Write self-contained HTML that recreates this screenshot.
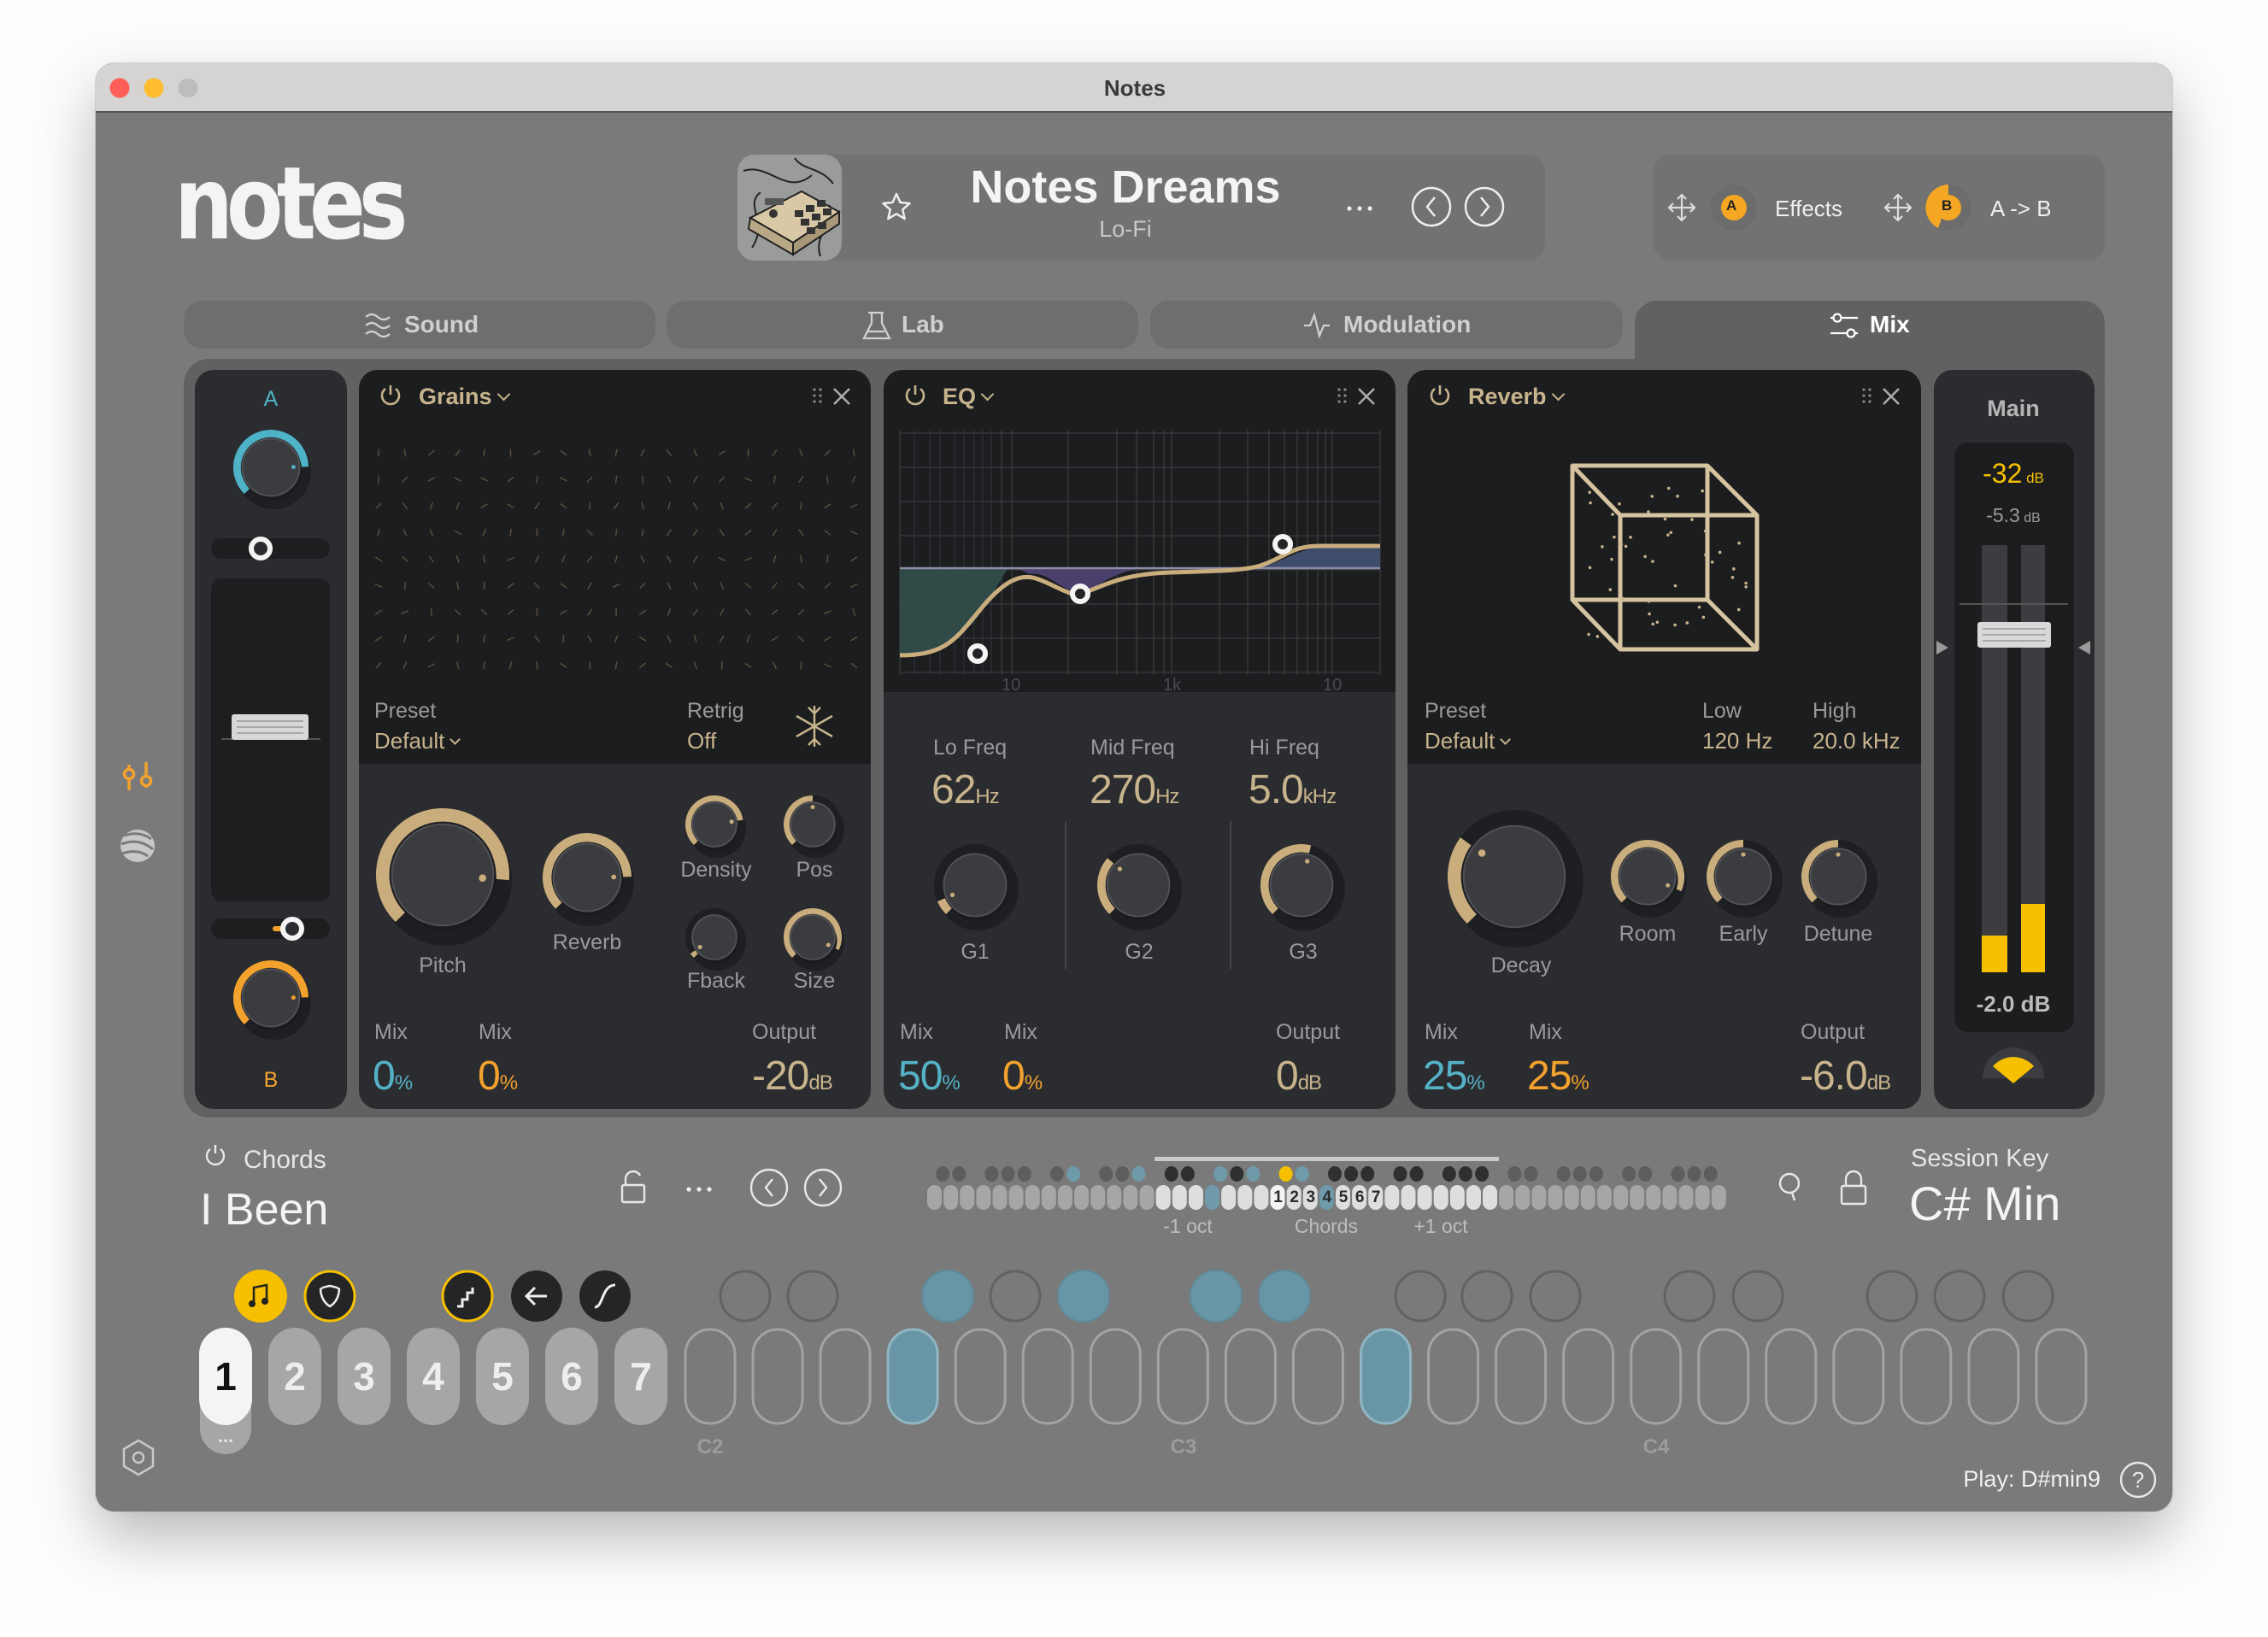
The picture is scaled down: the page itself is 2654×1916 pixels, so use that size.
<!DOCTYPE html>
<html><head><meta charset="utf-8">
<style>
*{box-sizing:border-box}
body{margin:0;width:2654px;height:1916px;background:#fdfdfd;position:relative;overflow:hidden;font-family:"Liberation Sans",sans-serif}
.a{position:absolute}
.t{position:absolute;white-space:nowrap;line-height:1}
.lab{color:#9a9a9c;font-size:25px}
.tan{color:#c8b48c}
.big{font-size:48px;letter-spacing:-1px}
.u{font-size:24px}
.blue{color:#55b2c6}
.org{color:#f3a22e}
.chev{display:inline-block;width:11px;height:11px;border-right:2.5px solid currentColor;border-bottom:2.5px solid currentColor;transform:rotate(45deg);margin-left:8px;position:relative;top:-6px}
</style></head><body>
<div class="a" style="left:112px;top:74px;width:2430px;height:1695px;border-radius:22px;background:#7a7a7a;box-shadow:0 30px 70px rgba(0,0,0,.28),0 0 0 1px rgba(0,0,0,.12);overflow:hidden">
 <div class="a" style="left:0;top:0;width:2430px;height:58px;background:#d5d4d3;border-bottom:2px solid #555"></div>
</div>
<div class="a" style="left:863px;top:181px;width:945px;height:124px;border-radius:20px;background:#727272"></div>
<div class="a" style="left:1935px;top:181px;width:528px;height:124px;border-radius:20px;background:#727272"></div>
<div class="a" style="left:215px;top:352px;width:552px;height:56px;border-radius:22px;background:#6e6e6e"></div>
<div class="a" style="left:780px;top:352px;width:552px;height:56px;border-radius:22px;background:#6e6e6e"></div>
<div class="a" style="left:1346px;top:352px;width:553px;height:56px;border-radius:22px;background:#6e6e6e"></div>
<div class="a" style="left:1913px;top:352px;width:550px;height:90px;border-radius:26px 26px 0 0;background:#616161"></div>
<div class="a" style="left:215px;top:420px;width:2248px;height:888px;border-radius:30px;background:#616161"></div>
<div class="a" style="left:228px;top:433px;width:178px;height:865px;border-radius:22px;background:#2b2c2f"></div>
<div class="a" style="left:247px;top:677px;width:139px;height:378px;border-radius:12px;background:#1d1e20"></div>
<div class="a" style="left:247px;top:630px;width:139px;height:24px;border-radius:12px;background:#1d1e20"></div>
<div class="a" style="left:247px;top:1075px;width:139px;height:24px;border-radius:12px;background:#1d1e20"></div>
<div class="a" style="left:420px;top:433px;width:599px;height:865px;border-radius:22px;background:#2b2c2f;overflow:hidden"><div class="a" style="left:0;top:0;width:599px;height:461px;background:#1c1d1f"></div></div>
<div class="a" style="left:1034px;top:433px;width:599px;height:865px;border-radius:22px;background:#2b2c2f;overflow:hidden"><div class="a" style="left:0;top:0;width:599px;height:377px;background:#1c1d1f"></div></div>
<div class="a" style="left:1647px;top:433px;width:601px;height:865px;border-radius:22px;background:#2b2c2f;overflow:hidden"><div class="a" style="left:0;top:0;width:601px;height:461px;background:#1c1d1f"></div></div>
<div class="a" style="left:2263px;top:433px;width:188px;height:865px;border-radius:22px;background:#2b2c2f"></div>
<div class="a" style="left:2287px;top:518px;width:140px;height:690px;border-radius:16px;background:#1c1d1f"></div>

<svg id="g" class="a" style="left:0;top:0" width="2654" height="1916" viewBox="0 0 2654 1916">
 <circle cx="140" cy="103" r="11.5" fill="#fe5f57"/><circle cx="180" cy="103" r="11.5" fill="#febc2e"/><circle cx="220" cy="103" r="11.5" fill="#bdbdbd"/>
 <clipPath id="ac"><rect x="863" y="181" width="122" height="124" rx="20"/></clipPath>
 <g clip-path="url(#ac)">
  <rect x="863" y="181" width="122" height="124" fill="#9a9c9b"/>
  <path d="M870 200 C900 190 920 230 950 205 M880 290 C900 260 870 240 890 225 M960 300 C950 270 985 260 970 240 M930 185 C940 200 960 195 975 215" stroke="#222" stroke-width="2" fill="none"/>
  <polygon points="878,255 938,224 982,248 928,284" fill="#d9c8a6" stroke="#222" stroke-width="2"/>
  <polygon points="878,255 928,284 928,298 876,268" fill="#b8a886" stroke="#222" stroke-width="2"/>
  <polygon points="928,284 982,248 982,262 928,298" fill="#a89878" stroke="#222" stroke-width="2"/>
  <g fill="#333"><rect x="930" y="246" width="10" height="8"/><rect x="943" y="240" width="10" height="8"/><rect x="956" y="234" width="10" height="8"/><rect x="937" y="256" width="10" height="8"/><rect x="950" y="250" width="10" height="8"/><rect x="963" y="244" width="10" height="8"/><rect x="944" y="266" width="10" height="8"/><rect x="957" y="260" width="10" height="8"/></g>
  <circle cx="905" cy="250" r="5" fill="#333"/><rect x="895" y="232" width="22" height="8" fill="#555"/>
 </g>
 <path d="M1049 227 l4.5 10 11 1 -8.3 7.3 2.5 10.8 -9.7-5.8 -9.7 5.8 2.5-10.8 -8.3-7.3 11-1z" fill="none" stroke="#eee" stroke-width="2.5" stroke-linejoin="round"/>
 <circle cx="1579" cy="244" r="2.6" fill="#eee"/><circle cx="1591" cy="244" r="2.6" fill="#eee"/><circle cx="1603" cy="244" r="2.6" fill="#eee"/>
 <circle cx="1675" cy="242" r="22" fill="none" stroke="#eee" stroke-width="2.5"/><path d="M1679 231 l-9 11 9 11" fill="none" stroke="#eee" stroke-width="2.5"/>
 <circle cx="1737" cy="242" r="22" fill="none" stroke="#eee" stroke-width="2.5"/><path d="M1733 231 l9 11 -9 11" fill="none" stroke="#eee" stroke-width="2.5"/>
 <g stroke="#ddd" stroke-width="2.2" fill="none">
  <path d="M1968 228 v30 M1953 243 h30 M1963 233 l5-5 5 5 M1963 253 l5 5 5-5 M1958 238 l-5 5 5 5 M1978 238 l5 5 -5 5"/>
  <path d="M2221 228 v30 M2206 243 h30 M2216 233 l5-5 5 5 M2216 253 l5 5 5-5 M2211 238 l-5 5 5 5 M2231 238 l5 5 -5 5"/>
 </g>
 <circle cx="2029" cy="243" r="27" fill="#6c6c6c"/><circle cx="2029" cy="243" r="15" fill="#f5a623"/>
 <circle cx="2280" cy="243" r="27" fill="#6c6c6c"/><path d="M2280 216 A27 27 0 0 0 2268 267 L2272 256 A16 16 0 0 1 2280 228 Z" fill="#f5a623"/><circle cx="2280" cy="243" r="15" fill="#f5a623"/>
 <g stroke="#d0d0d0" stroke-width="2.3" fill="none">
  <path d="M428 371 q7-6 14 0 t14 0 M428 381 q7-6 14 0 t14 0 M428 391 q7-6 14 0 t14 0"/>
  <path d="M1020 366 v12 l-9 18 h30 l-9-18 v-12 M1016 366 h18 M1015 388 h20"/>
  <path d="M1526 381 h7 l5-12 6 24 5-12 h7"/>
 </g>
 <g stroke="#fff" stroke-width="2.3" fill="none"><path d="M2142 372 h32 M2142 390 h32"/><circle cx="2150" cy="372" r="4.5" fill="#616161"/><circle cx="2166" cy="390" r="4.5" fill="#616161"/></g>
 <g stroke="#f3a22e" stroke-width="3.5" fill="none"><path d="M151 895 v30 M171 892 v30"/><circle cx="151" cy="906" r="5.5" fill="#7a7a7a"/><circle cx="171" cy="914" r="5.5" fill="#7a7a7a"/></g>
 <ellipse cx="161" cy="990" rx="20" ry="19" fill="#c8c8c8"/>
 <g stroke="#7a7a7a" stroke-width="3" fill="none"><path d="M145 978 q18-6 32 4 M142 988 q20-8 37 6 M143 999 q18-6 30 3"/></g>
 <g id="hdr" stroke="#c8b48c" stroke-width="2.6" fill="none"></g>
 <g stroke="#c8b48c" stroke-width="2.5" fill="none"><path d="M953 826 v48 M932 838 l42 24 M932 862 l42-24 M946 828 l7 7 7-7 M946 872 l7-7 7 7"/></g>
 <g id="ticks" stroke="#6a5e46" stroke-width="1.4" opacity=".8"></g>
 <g id="eqgrid" stroke="#3a3b3e" stroke-width="1.3"></g>
 <path d="M1053 665 H1180 C1160 690 1140 767 1053 767 Z" fill="#33504c" opacity=".9"/>
 <path d="M1190 665 H1340 C1300 668 1280 692 1264 695 C1240 690 1225 668 1205 672 Z" fill="#4a3f6a"/>
 <path d="M1470 665 C1500 660 1520 639 1560 639 H1615 V665 Z" fill="#3f4d6d"/>
 <line x1="1053" y1="665" x2="1615" y2="665" stroke="#8e8ea6" stroke-width="2.5"/>
 <path d="M1053 767 C1110 767 1120 745 1150 710 C1175 680 1195 670 1215 678 C1235 685 1250 697 1264 695 C1285 690 1305 672 1370 670 C1420 668 1450 669 1475 662 C1505 652 1510 639 1545 639 H1615" fill="none" stroke="#c9ad7d" stroke-width="5"/>
 <g fill="#232427" stroke="#f4f4f4" stroke-width="6"><circle cx="1144" cy="765" r="9"/><circle cx="1264" cy="695" r="9"/><circle cx="1501" cy="637" r="9"/></g>
 <g stroke="#d6c4a0" stroke-width="5" fill="none" stroke-linejoin="round"><path d="M1840 545 H1998 V702 H1840 Z M1896 603 H2056 V760 H1896 Z M1840 545 L1896 603 M1998 545 L2056 603 M1840 702 L1896 760 M1998 702 L2056 760"/></g>
 <g id="cubedots" fill="#c8b48c"></g>
 <rect x="2319" y="638" width="30" height="500" fill="#3c3d40"/><rect x="2365" y="638" width="28" height="500" fill="#3c3d40"/>
 <rect x="2319" y="1095" width="30" height="43" fill="#f6c000"/><rect x="2365" y="1058" width="28" height="80" fill="#f6c000"/>
 <line x1="2293" y1="707" x2="2420" y2="707" stroke="#555" stroke-width="2"/>
 <rect x="2314" y="728" width="86" height="30" rx="3" fill="#d8d8d8"/><g stroke="#999" stroke-width="1.5"><path d="M2320 736 h74 M2320 743 h74 M2320 750 h74"/></g>
 <path d="M2266 750 l14 8 -14 8z M2446 750 l-14 8 14 8z" fill="#9a9a9a"/>
 <path d="M2320 1262 A36 36 0 0 1 2392 1262 Z" fill="#3c3d40"/>
 <path d="M2332 1248 A32 32 0 0 1 2380 1248 L2356 1268 Z M2332 1248 Q2356 1228 2380 1248" fill="#f6c000"/>
 <circle cx="305" cy="642" r="11" fill="#2b2c2f" stroke="#f4f4f4" stroke-width="6"/>
 <rect x="319" y="1084" width="18" height="6" rx="3" fill="#f3a22e"/>
 <circle cx="342" cy="1087" r="11" fill="#2b2c2f" stroke="#f4f4f4" stroke-width="6"/>
 <line x1="259" y1="865" x2="375" y2="865" stroke="#555" stroke-width="2"/>
 <rect x="271" y="836" width="90" height="30" rx="3" fill="#d8d8d8"/><g stroke="#999" stroke-width="1.5"><path d="M277 844 h78 M277 851 h78 M277 858 h78"/></g>
 <g id="knobs"></g>
 <line x1="1247" y1="961" x2="1247" y2="1134" stroke="#45464a" stroke-width="2"/><line x1="1440" y1="961" x2="1440" y2="1134" stroke="#45464a" stroke-width="2"/>
 <g stroke="#e8e8e8" stroke-width="2.4" fill="none">
  <path d="M246 1345 a10 10 0 1 0 12 0 M252 1340 v10"/>
  <rect x="728" y="1387" width="26" height="20" rx="2"/><path d="M732 1387 v-8 a9 9 0 0 1 17-3"/>
  <circle cx="900" cy="1390" r="21"/><path d="M904 1380 l-8 10 8 10"/>
  <circle cx="963" cy="1390" r="21"/><path d="M959 1380 l8 10 -8 10"/>
  <circle cx="2094" cy="1385" r="11"/><path d="M2097 1396 l3 9"/>
  <rect x="2155" y="1388" width="28" height="21" rx="2"/><path d="M2160 1388 v-8 a9 9 0 0 1 18 0 v8"/>
  <circle cx="2502" cy="1732" r="20"/>
 </g>
 <circle cx="806" cy="1392" r="2.6" fill="#eee"/><circle cx="818" cy="1392" r="2.6" fill="#eee"/><circle cx="830" cy="1392" r="2.6" fill="#eee"/>
 <rect x="1351" y="1354" width="403" height="5" fill="#c9c9c9"/>
 <g id="mini"></g>
 <g id="bigk"></g>
 <circle cx="305" cy="1517" r="31" fill="#f6c000"/>
 <g stroke="#222" stroke-width="2.5" fill="none"><path d="M297 1525 v-18 l15-3 v18"/></g><circle cx="295" cy="1526" r="4" fill="#222"/><circle cx="310" cy="1523" r="4" fill="#222"/>
 <circle cx="386" cy="1517" r="29" fill="#242527" stroke="#f6c000" stroke-width="3"/>
 <path d="M386 1505 q10 2 11 4 q-1 14 -11 20 q-10-6 -11-20 q1-2 11-4z" fill="none" stroke="#eee" stroke-width="2.5"/>
 <circle cx="547" cy="1517" r="29" fill="#242527" stroke="#f6c000" stroke-width="3"/>
 <path d="M535 1529 h6 v-8 h6 v-8 h6 v-6" fill="none" stroke="#eee" stroke-width="3"/>
 <circle cx="628" cy="1517" r="30" fill="#242527"/>
 <path d="M640 1517 h-24 M626 1507 l-10 10 10 10" fill="none" stroke="#eee" stroke-width="3"/>
 <circle cx="708" cy="1517" r="30" fill="#242527"/>
 <path d="M696 1530 c10 0 8-26 24-26" fill="none" stroke="#eee" stroke-width="3"/>
 <path d="M162 1686 l17 10 v20 l-17 10 -17-10 v-20z" fill="none" stroke="#c8c8c8" stroke-width="2.5"/><circle cx="162" cy="1706" r="6" fill="none" stroke="#c8c8c8" stroke-width="2.5"/>
</svg>

<div class="t" style="left:1328px;top:90px;transform:translateX(-50%);font-size:26px;font-weight:bold;color:#3a3a3a">Notes</div>
<div class="t" style="left:204px;top:180px;font-size:124px;font-weight:900;color:#f4f4f4;letter-spacing:-10px;transform:scale(0.78,0.95);transform-origin:left top;font-family:'DejaVu Sans','Liberation Sans',sans-serif">notes</div>
<div class="t" style="left:1317px;top:192px;transform:translateX(-50%);font-size:54px;font-weight:bold;color:#f4f4f4">Notes Dreams</div>
<div class="t" style="left:1317px;top:255px;transform:translateX(-50%);font-size:27px;color:#c8c8c8">Lo-Fi</div>
<div class="t" style="left:2020px;top:232px;font-size:17px;font-weight:bold;color:#222">A</div>
<div class="t" style="left:2272px;top:232px;font-size:17px;font-weight:bold;color:#222">B</div>
<div class="t" style="left:2077px;top:231px;font-size:26px;color:#efefef">Effects</div>
<div class="t" style="left:2329px;top:231px;font-size:26px;color:#efefef">A -&gt; B</div>
<div class="t" style="left:473px;top:366px;font-size:28px;font-weight:bold;color:#d0d0d0">Sound</div>
<div class="t" style="left:1055px;top:366px;font-size:28px;font-weight:bold;color:#d0d0d0">Lab</div>
<div class="t" style="left:1572px;top:366px;font-size:28px;font-weight:bold;color:#d0d0d0">Modulation</div>
<div class="t" style="left:2188px;top:366px;font-size:28px;font-weight:bold;color:#fff">Mix</div>

<div class="t" style="left:317px;top:455px;transform:translateX(-50%);font-size:25px;color:#4fb3c8">A</div>
<div class="t" style="left:317px;top:1252px;transform:translateX(-50%);font-size:25px;color:#f3a22e">B</div>

<div class="t tan" style="left:490px;top:451px;font-size:27px;font-weight:bold">Grains<span class="chev"></span></div>
<div class="t lab" style="left:438px;top:820px">Preset</div>
<div class="t tan" style="left:438px;top:854px;font-size:26px">Default<span class="chev" style="width:9px;height:9px;border-width:2px"></span></div>
<div class="t lab" style="left:804px;top:820px">Retrig</div>
<div class="t tan" style="left:804px;top:854px;font-size:26px">Off</div>
<div class="t lab" style="left:518px;top:1118px;transform:translateX(-50%)">Pitch</div>
<div class="t lab" style="left:687px;top:1091px;transform:translateX(-50%)">Reverb</div>
<div class="t lab" style="left:838px;top:1006px;transform:translateX(-50%)">Density</div>
<div class="t lab" style="left:953px;top:1006px;transform:translateX(-50%)">Pos</div>
<div class="t lab" style="left:838px;top:1136px;transform:translateX(-50%)">Fback</div>
<div class="t lab" style="left:953px;top:1136px;transform:translateX(-50%)">Size</div>
<div class="t lab" style="left:438px;top:1196px">Mix</div>
<div class="t lab" style="left:560px;top:1196px">Mix</div>
<div class="t lab" style="left:880px;top:1196px">Output</div>
<div class="t big blue" style="left:436px;top:1236px">0<span class="u">%</span></div>
<div class="t big org" style="left:559px;top:1236px">0<span class="u">%</span></div>
<div class="t big tan" style="left:880px;top:1236px">-20<span class="u">dB</span></div>

<div class="t tan" style="left:1103px;top:451px;font-size:27px;font-weight:bold">EQ<span class="chev"></span></div>
<div class="t" style="left:1172px;top:792px;font-size:20px;color:#4a4b4e">10</div>
<div class="t" style="left:1361px;top:792px;font-size:20px;color:#4a4b4e">1k</div>
<div class="t" style="left:1548px;top:792px;font-size:20px;color:#4a4b4e">10</div>
<div class="t lab" style="left:1092px;top:863px">Lo Freq</div>
<div class="t lab" style="left:1276px;top:863px">Mid Freq</div>
<div class="t lab" style="left:1462px;top:863px">Hi Freq</div>
<div class="t big tan" style="left:1090px;top:901px">62<span class="u">Hz</span></div>
<div class="t big tan" style="left:1275px;top:901px">270<span class="u">Hz</span></div>
<div class="t big tan" style="left:1461px;top:901px">5.0<span class="u">kHz</span></div>
<div class="t lab" style="left:1141px;top:1102px;transform:translateX(-50%)">G1</div>
<div class="t lab" style="left:1333px;top:1102px;transform:translateX(-50%)">G2</div>
<div class="t lab" style="left:1525px;top:1102px;transform:translateX(-50%)">G3</div>
<div class="t lab" style="left:1053px;top:1196px">Mix</div>
<div class="t lab" style="left:1175px;top:1196px">Mix</div>
<div class="t lab" style="left:1493px;top:1196px">Output</div>
<div class="t big blue" style="left:1051px;top:1236px">50<span class="u">%</span></div>
<div class="t big org" style="left:1173px;top:1236px">0<span class="u">%</span></div>
<div class="t big tan" style="left:1493px;top:1236px">0<span class="u">dB</span></div>

<div class="t tan" style="left:1718px;top:451px;font-size:27px;font-weight:bold">Reverb<span class="chev"></span></div>
<div class="t lab" style="left:1667px;top:820px">Preset</div>
<div class="t tan" style="left:1667px;top:854px;font-size:26px">Default<span class="chev" style="width:9px;height:9px;border-width:2px"></span></div>
<div class="t lab" style="left:1992px;top:820px">Low</div>
<div class="t tan" style="left:1992px;top:854px;font-size:26px">120 Hz</div>
<div class="t lab" style="left:2121px;top:820px">High</div>
<div class="t tan" style="left:2121px;top:854px;font-size:26px">20.0 kHz</div>
<div class="t lab" style="left:1780px;top:1118px;transform:translateX(-50%)">Decay</div>
<div class="t lab" style="left:1928px;top:1081px;transform:translateX(-50%)">Room</div>
<div class="t lab" style="left:2040px;top:1081px;transform:translateX(-50%)">Early</div>
<div class="t lab" style="left:2151px;top:1081px;transform:translateX(-50%)">Detune</div>
<div class="t lab" style="left:1667px;top:1196px">Mix</div>
<div class="t lab" style="left:1789px;top:1196px">Mix</div>
<div class="t lab" style="left:2107px;top:1196px">Output</div>
<div class="t big blue" style="left:1665px;top:1236px">25<span class="u">%</span></div>
<div class="t big org" style="left:1787px;top:1236px">25<span class="u">%</span></div>
<div class="t big tan" style="left:2106px;top:1236px">-6.0<span class="u">dB</span></div>

<div class="t" style="left:2356px;top:465px;transform:translateX(-50%);font-size:27px;font-weight:bold;color:#b5b5b5">Main</div>
<div class="t" style="left:2356px;top:538px;transform:translateX(-50%);font-size:32px;color:#f6c000">-32<span style="font-size:17px"> dB</span></div>
<div class="t" style="left:2356px;top:592px;transform:translateX(-50%);font-size:23px;color:#9a9a9a">-5.3<span style="font-size:16px"> dB</span></div>
<div class="t" style="left:2356px;top:1162px;transform:translateX(-50%);font-size:26px;font-weight:bold;color:#bbb">-2.0 dB</div>

<div class="t" style="left:285px;top:1343px;font-size:30px;color:#e6e6e6">Chords</div>
<div class="t" style="left:234px;top:1390px;font-size:52px;color:#f4f4f4">I Been</div>
<div class="t" style="left:1390px;top:1424px;transform:translateX(-50%);font-size:23px;color:#bdbdbd">-1 oct</div>
<div class="t" style="left:1552px;top:1424px;transform:translateX(-50%);font-size:23px;color:#bdbdbd">Chords</div>
<div class="t" style="left:1686px;top:1424px;transform:translateX(-50%);font-size:23px;color:#bdbdbd">+1 oct</div>
<div class="t" style="left:2236px;top:1342px;font-size:29px;color:#e6e6e6">Session Key</div>
<div class="t" style="left:2234px;top:1381px;font-size:56px;color:#f4f4f4">C# Min</div>
<div class="t" style="left:831px;top:1682px;transform:translateX(-50%);font-size:24px;font-weight:bold;color:#9c9c9c">C2</div>
<div class="t" style="left:1385px;top:1682px;transform:translateX(-50%);font-size:24px;font-weight:bold;color:#9c9c9c">C3</div>
<div class="t" style="left:1938px;top:1682px;transform:translateX(-50%);font-size:24px;font-weight:bold;color:#9c9c9c">C4</div>
<div class="t" style="left:2458px;top:1718px;transform:translateX(-100%);font-size:27px;color:#f0f0f0">Play: D#min9</div>
<div class="t" style="left:2502px;top:1719px;transform:translateX(-50%);font-size:26px;color:#e8e8e8">?</div>
<div class="t" style="left:264px;top:1670px;transform:translateX(-50%);font-size:22px;font-weight:bold;color:#e8e8e8">...</div>

<div class="t" style="left:1486px;top:1392px;font-size:19px;font-weight:bold;color:#2a2a2a;letter-spacing:0">
<span style="display:inline-block;width:19.12px;text-align:center">1</span><span style="display:inline-block;width:19.12px;text-align:center">2</span><span style="display:inline-block;width:19.12px;text-align:center">3</span><span style="display:inline-block;width:19.12px;text-align:center">4</span><span style="display:inline-block;width:19.12px;text-align:center">5</span><span style="display:inline-block;width:19.12px;text-align:center">6</span><span style="display:inline-block;width:19.12px;text-align:center">7</span></div>

<div class="t" style="left:264px;top:1588px;transform:translateX(-50%);font-size:46px;font-weight:bold;color:#111">1</div>
<div class="t" style="left:345px;top:1588px;transform:translateX(-50%);font-size:46px;font-weight:bold;color:#eee">2</div>
<div class="t" style="left:426px;top:1588px;transform:translateX(-50%);font-size:46px;font-weight:bold;color:#eee">3</div>
<div class="t" style="left:507px;top:1588px;transform:translateX(-50%);font-size:46px;font-weight:bold;color:#eee">4</div>
<div class="t" style="left:588px;top:1588px;transform:translateX(-50%);font-size:46px;font-weight:bold;color:#eee">5</div>
<div class="t" style="left:669px;top:1588px;transform:translateX(-50%);font-size:46px;font-weight:bold;color:#eee">6</div>
<div class="t" style="left:750px;top:1588px;transform:translateX(-50%);font-size:46px;font-weight:bold;color:#eee">7</div>

<script>
var NS="http://www.w3.org/2000/svg";
function el(p,tag,at){var e=document.createElementNS(NS,tag);for(var k in at)e.setAttribute(k,at[k]);p.appendChild(e);return e;}
var H=document.getElementById('hdr');
[[457,985],[1071,1599],[1685,2213]].forEach(function(p){
  el(H,'path',{d:'M'+(p[0]-6)+' 455 a10 10 0 1 0 12 0 M'+p[0]+' 451 v11'});
  el(H,'path',{d:'M'+(p[1]-9)+' 455 l18 18 M'+(p[1]+9)+' 455 l-18 18',stroke:'#aaa'});
  for(var r=0;r<3;r++)for(var c=0;c<2;c++)el(H,'circle',{cx:p[1]-32+c*7,cy:456+r*7,r:1.6,fill:'#888',stroke:'none'});
});
var T=document.getElementById('ticks');var s=7;
function rnd(){s=(s*9301+49297)%233280;return s/233280;}
for(var r=0;r<9;r++)for(var c=0;c<19;c++){var x=443+c*30.9,y=530+r*31.1,a=(rnd()-.5)*2.4,L=4.5;
 el(T,'line',{x1:x-L*Math.sin(a),y1:y-L*Math.cos(a),x2:x+L*Math.sin(a),y2:y+L*Math.cos(a)});}
var E=document.getElementById('eqgrid');
for(var i=0;i<8;i++)el(E,'line',{x1:1053,x2:1615,y1:507+i*40,y2:507+i*40});
[1053,1172,1184,1250,1307,1330,1350,1362,1371,1427,1460,1485,1503,1518,1530,1542,1551,1559,1615].forEach(function(x){el(E,'line',{x1:x,x2:x,y1:503,y2:790});});
[1070,1088,1100,1117,1128,1140,1150,1160].forEach(function(x){el(E,'line',{x1:x,x2:x,y1:503,y2:790,stroke:'#2f3033'});});
var C=document.getElementById('cubedots');
for(var i=0;i<45;i++){el(C,'circle',{cx:1855+rnd()*190,cy:565+rnd()*185,r:1.8});}
var K=document.getElementById('knobs');
function pt(cx,cy,r,a){a=a*Math.PI/180;return [cx+r*Math.sin(a),cy-r*Math.cos(a)];}
function knob(cx,cy,R,f,col){
 var w=R*0.2,r=R-w/2;
 el(K,'circle',{cx:cx+3,cy:cy+5,r:R,fill:'#1e1f22'});
 el(K,'circle',{cx:cx,cy:cy,r:R,fill:'#1e1f22'});
 var a0=-135,a1=-135+270*f;
 if(f>0.02){var p0=pt(cx,cy,r,a0),p1=pt(cx,cy,r,a1);
 el(K,'path',{d:'M'+p0[0]+' '+p0[1]+' A'+r+' '+r+' 0 '+((a1-a0)>180?1:0)+' 1 '+p1[0]+' '+p1[1],fill:'none',stroke:col,'stroke-width':w});}
 el(K,'circle',{cx:cx+2,cy:cy+4,r:R*0.78,fill:'#1a1b1d'});
 el(K,'circle',{cx:cx,cy:cy,r:R*0.76,fill:'#3b3c40',stroke:'#505155','stroke-width':2});
 var d=pt(cx,cy,R*0.6,a1);el(K,'circle',{cx:d[0],cy:d[1],r:Math.max(2.5,R*0.055),fill:col});
}
var tan='#c9ad7d';
knob(317,547,44,0.83,'#4fb3c8');knob(317,1168,44,0.83,'#f3a22e');
knob(518,1024,78,0.85,tan);knob(687,1027,52,0.83,tan);
knob(836,965,34,0.8,tan);knob(951,965,34,0.5,tan);knob(836,1097,34,0.04,tan);knob(951,1097,34,0.93,tan);
knob(1141,1036,48,0.08,tan);knob(1332,1036,48,0.32,tan);knob(1523,1036,48,0.55,tan);
knob(1772,1026,78,0.3,tan);knob(1928,1026,43,0.92,tan);knob(2040,1026,43,0.5,tan);knob(2151,1026,43,0.5,tan);
var M=document.getElementById('mini');
for(var i=0;i<49;i++){var x=1084+i*19.12;var col=(i>=14&&i<=34)?'#dedede':'#a6a6a6';
 if(i==17||i==24)col='#6e9aaa';if(i==21)col='#f4f4f4';
 el(M,'rect',{x:x+1,y:1387,width:17,height:29,rx:8.5,fill:col});}
var dc=['g','g','g','g','g', 'g','b','g','g','b', 'd','d','b','d','b', 'y','b','d','d','d', 'd','d','d','d','d', 'g','g','g','g','g', 'g','g','g','g','g'];
var cm={g:'#5d5d5d',d:'#2e2f31',b:'#6e9aaa',y:'#f6c000'};var n=0;
for(var i=0;i<48;i++){if([0,1,3,4,5].indexOf(i%7)>=0){el(M,'ellipse',{cx:1084+(i+1)*19.12,cy:1374,rx:8,ry:9,fill:cm[dc[n]]});n++;}}
var B=document.getElementById('bigk');
el(B,'rect',{x:234,y:1554,width:60,height:148,rx:30,fill:'#a6a6a6'});
for(var i=0;i<28;i++){
 if(i<7){var cx=264+i*81;el(B,'rect',{x:cx-31,y:1554,width:62,height:114,rx:31,fill:i==0?'#f4f4f4':'#a6a6a6'});}
 else{var cx=831+(i-7)*79.05;var bl=(i==10||i==17);el(B,'rect',{x:cx-29,y:1556,width:58,height:110,rx:29,fill:bl?'#6996a6':'none',stroke:bl?'#8fb6c2':'#a3a3a3','stroke-width':3});}}
[872,951,1188,1662,1740,1820,1977,2057,2214,2293,2373].forEach(function(x){el(B,'circle',{cx:x,cy:1517,r:29,fill:'none',stroke:'#626262','stroke-width':3});});
[1109,1268,1423,1503].forEach(function(x){el(B,'circle',{cx:x,cy:1517,r:30,fill:'#6996a6',stroke:'#5f8a99','stroke-width':2});});
</script>
</body></html>
